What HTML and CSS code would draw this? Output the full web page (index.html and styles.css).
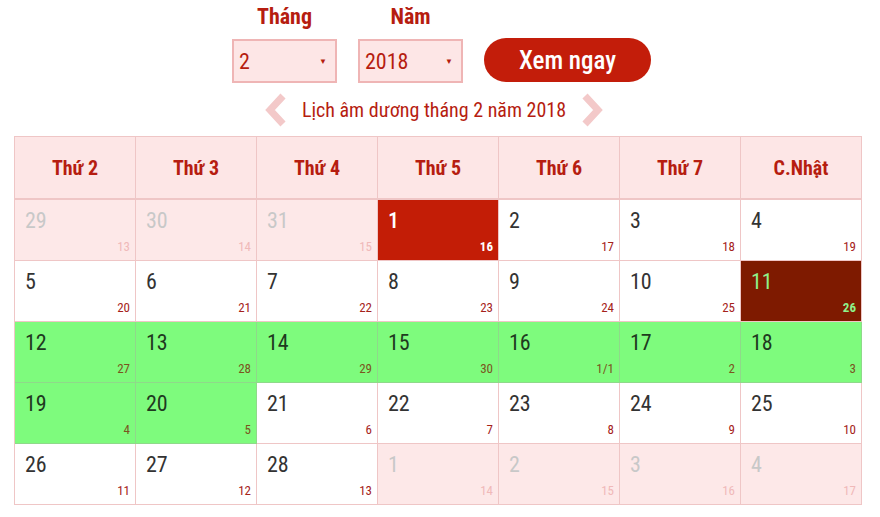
FILE: index.html
```html
<!DOCTYPE html>
<html lang="vi">
<head>
<meta charset="utf-8">
<link rel="stylesheet" href="styles.css">
</head>
<body>
<div class="page">
  <div class="controls">
    <div class="field">
      <div class="label">Tháng</div>
      <div class="select"><span>2</span><span class="caret">▼</span></div>
    </div>
    <div class="field">
      <div class="label">Năm</div>
      <div class="select"><span>2018</span><span class="caret">▼</span></div>
    </div>
    <button class="btn">Xem ngay</button>
  </div>
  <div class="nav">
    <svg class="arrow" width="24" height="34" viewBox="0 0 24 34"><path d="M19 3 L6 17 L19 31" fill="none" stroke="#f3c9c9" stroke-width="7"/></svg>
    <span class="nav-title">Lịch âm dương tháng 2 năm 2018</span>
    <svg class="arrow" width="24" height="34" viewBox="0 0 24 34"><path d="M5 3 L18 17 L5 31" fill="none" stroke="#f3c9c9" stroke-width="7"/></svg>
  </div>
  <div class="cal">
    <div class="hd">Thứ 2</div><div class="hd">Thứ 3</div><div class="hd">Thứ 4</div><div class="hd">Thứ 5</div><div class="hd">Thứ 6</div><div class="hd">Thứ 7</div><div class="hd">C.Nhật</div>

    <div class="c off"><span class="d">29</span><span class="l">13</span></div>
    <div class="c off"><span class="d">30</span><span class="l">14</span></div>
    <div class="c off"><span class="d">31</span><span class="l">15</span></div>
    <div class="c red"><span class="d">1</span><span class="l">16</span></div>
    <div class="c"><span class="d">2</span><span class="l">17</span></div>
    <div class="c"><span class="d">3</span><span class="l">18</span></div>
    <div class="c"><span class="d">4</span><span class="l">19</span></div>

    <div class="c"><span class="d">5</span><span class="l">20</span></div>
    <div class="c"><span class="d">6</span><span class="l">21</span></div>
    <div class="c"><span class="d">7</span><span class="l">22</span></div>
    <div class="c"><span class="d">8</span><span class="l">23</span></div>
    <div class="c"><span class="d">9</span><span class="l">24</span></div>
    <div class="c"><span class="d">10</span><span class="l">25</span></div>
    <div class="c today"><span class="d">11</span><span class="l">26</span></div>

    <div class="c green"><span class="d">12</span><span class="l">27</span></div>
    <div class="c green"><span class="d">13</span><span class="l">28</span></div>
    <div class="c green"><span class="d">14</span><span class="l">29</span></div>
    <div class="c green"><span class="d">15</span><span class="l">30</span></div>
    <div class="c green"><span class="d">16</span><span class="l">1/1</span></div>
    <div class="c green"><span class="d">17</span><span class="l">2</span></div>
    <div class="c green"><span class="d">18</span><span class="l">3</span></div>

    <div class="c green"><span class="d">19</span><span class="l">4</span></div>
    <div class="c green"><span class="d">20</span><span class="l">5</span></div>
    <div class="c"><span class="d">21</span><span class="l">6</span></div>
    <div class="c"><span class="d">22</span><span class="l">7</span></div>
    <div class="c"><span class="d">23</span><span class="l">8</span></div>
    <div class="c"><span class="d">24</span><span class="l">9</span></div>
    <div class="c"><span class="d">25</span><span class="l">10</span></div>

    <div class="c"><span class="d">26</span><span class="l">11</span></div>
    <div class="c"><span class="d">27</span><span class="l">12</span></div>
    <div class="c"><span class="d">28</span><span class="l">13</span></div>
    <div class="c off"><span class="d">1</span><span class="l">14</span></div>
    <div class="c off"><span class="d">2</span><span class="l">15</span></div>
    <div class="c off"><span class="d">3</span><span class="l">16</span></div>
    <div class="c off"><span class="d">4</span><span class="l">17</span></div>
  </div>
</div>
</body>
</html>
```
FILE: styles.css
```css
* { box-sizing: border-box; }
body {
  margin: 0;
  background: #fff;
  font-family: "Roboto Condensed", Roboto, "Liberation Sans", sans-serif;
  font-stretch: condensed;
}
.page {
  width: 880px;
  padding: 4px 0 0 14px;
}
.controls {
  display: flex;
  align-items: flex-end;
  padding-left: 218px;
  gap: 21px;
}
.field {
  display: flex;
  flex-direction: column;
  align-items: center;
  width: 105px;
}
.label {
  color: #b61d10;
  font-weight: bold;
  font-size: 22px;
  line-height: 26px;
  margin-bottom: 9px;
}
.select {
  width: 105px;
  height: 44px;
  background: #fde6e6;
  border: 2px solid #efb5b5;
  display: flex;
  align-items: center;
  justify-content: space-between;
  padding: 0 8px 0 5px;
  color: #b61d10;
  font-size: 22px;
}
.caret {
  font-size: 8px;
  color: #b61d10;
}
.btn {
  width: 167px;
  height: 44px;
  border: none;
  border-radius: 22px;
  background: #c31d0a;
  color: #fff;
  font-family: inherit;
  font-size: 25px;
  font-weight: 500;
  padding: 0;
  margin-bottom: 1px;
}
.nav {
  display: flex;
  align-items: center;
  justify-content: center;
  gap: 14px;
  height: 40px;
  margin: 7px 0 6px;
  padding-right: 26px;
}
.nav-title {
  color: #b61d10;
  font-size: 20px;
}
.arrow { display: block; }
.cal {
  display: grid;
  grid-template-columns: repeat(7, 121px);
  grid-template-rows: 63px repeat(5, 61px);
  width: 848px;
  border-top: 1px solid #efc6c6;
  border-left: 1px solid #efc6c6;
}
.hd {
  background: #fde6e6;
  border-right: 1px solid #efc6c6;
  border-bottom: 2px solid #efc6c6;
  display: flex;
  align-items: center;
  justify-content: center;
  color: #b61d10;
  font-weight: bold;
  font-size: 20px;
}
.c {
  position: relative;
  border-right: 1px solid #efc6c6;
  border-bottom: 1px solid #efc6c6;
  background: #fff;
}
.d {
  position: absolute;
  left: 10px;
  top: 8px;
  font-size: 22px;
  color: #333;
}
.l {
  position: absolute;
  right: 5px;
  bottom: 6px;
  font-size: 13px;
  color: #a5221a;
}
.off { background: #fde8e8; }
.off .d { color: #c8c8c8; }
.off .l { color: #f0b9b9; }
.red { background: #c31d06; }
.red .d { color: #fff; font-weight: 500; }
.red .l { color: #fff; font-weight: bold; }
.today { background: #7e1a00; }
.today .d { color: #8ef28a; }
.today .l { color: #8ef28a; font-weight: bold; }
.green {
  background: #7efb7d;
  border-right-color: #8fd98a;
  border-bottom-color: #8fd98a;
}
.green .d { color: #1f3a1f; }
.green .l { color: #7b5420; }
```
